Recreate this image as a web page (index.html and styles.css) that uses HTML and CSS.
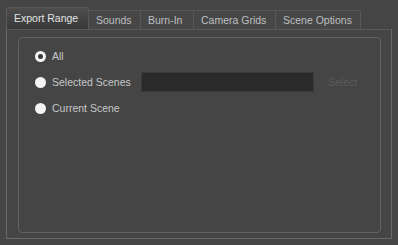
FILE: index.html
```html
<!DOCTYPE html>
<html lang="en">
<head>
    <meta charset="UTF-8">
    <title>Export</title>
    <link rel="stylesheet" href="styles.css">
</head>
<body>
    <div class="tab-bar">
        <div class="tab active">Export Range</div>
        <div class="tab">Sounds</div>
        <div class="tab">Burn-In</div>
        <div class="tab">Camera Grids</div>
        <div class="tab">Scene Options</div>
    </div>
    <div class="pane">
        <div class="group">
            <div class="row">
                <span class="radio checked"></span>
                <span class="label">All</span>
            </div>
            <div class="row">
                <span class="radio"></span>
                <span class="label scenes-label">Selected Scenes</span>
                <div class="field"></div>
                <span class="select-btn">Select</span>
            </div>
            <div class="row">
                <span class="radio"></span>
                <span class="label">Current Scene</span>
            </div>
        </div>
    </div>
</body>
</html>
```

FILE: styles.css
```css
body {
    margin: 0;
    width: 398px;
    height: 245px;
    background-color: #454545;
    font-family: "Liberation Sans", Arial, sans-serif;
    font-size: 10.5px;
    color: #c6c8ca;
    overflow: hidden;
}

.tab-bar {
    display: flex;
    align-items: flex-end;
    height: 29px;
    padding-left: 6px;
}

.tab {
    box-sizing: border-box;
    height: 19px;
    padding: 0 0 0 7px;
    line-height: 19px;
    white-space: nowrap;
    border: 1px solid #585858;
    border-bottom: none;
    border-left: none;
    color: #bdbfc1;
    background-color: #474747;
}

.tab.active {
    height: 22px;
    line-height: 20px;
    border-left: 1px solid #5c5c5c;
    border-radius: 3px 3px 0 0;
    color: #e2e4e6;
    background: linear-gradient(#4e4e4e, #383838);
}

.tab:nth-child(1) { width: 83px; }
.tab:nth-child(2) { width: 52px; }
.tab:nth-child(3) { width: 53px; }
.tab:nth-child(4) { width: 82px; }
.tab:nth-child(5) { width: 85px; border-radius: 0 3px 0 0; }

.pane {
    box-sizing: border-box;
    width: 386px;
    height: 210px;
    margin-left: 6px;
    padding: 7px 10px 5px 11px;
    border: 1px solid #686868;
    border-top-color: #5a5a5a;
}

.group {
    box-sizing: border-box;
    height: 196px;
    padding-top: 8px;
    border: 1px solid #626262;
    border-radius: 4px;
}

.row {
    display: flex;
    align-items: center;
    height: 20px;
    margin-bottom: 6px;
    padding-left: 16px;
    white-space: nowrap;
}

.radio {
    box-sizing: border-box;
    width: 11px;
    height: 11px;
    border-radius: 50%;
    background-color: #f4f4f4;
    margin-right: 6px;
}

.radio.checked {
    border: 3px solid #f4f4f4;
    background-color: #3a3a3a;
}

.scenes-label {
    width: 89px;
}

.field {
    box-sizing: border-box;
    width: 173px;
    height: 20px;
    background-color: #2a2a2a;
    border: 1px solid #3a3a3a;
}

.select-btn {
    margin-left: 14px;
    color: #5c5c5c;
}
```
